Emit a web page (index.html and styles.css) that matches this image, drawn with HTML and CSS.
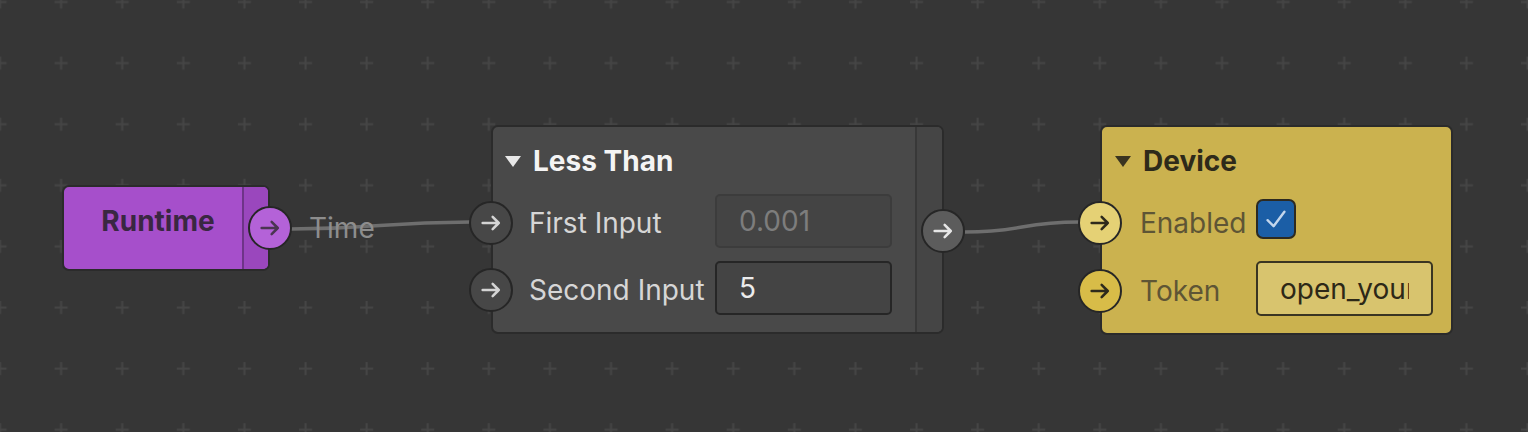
FILE: index.html
```html
<!DOCTYPE html>
<html>
<head>
<meta charset="utf-8">
<link rel="stylesheet" href="styles.css">
</head>
<body>
<div class="canvas">
  <svg class="grid" width="1528" height="432" aria-hidden="true">
    <defs>
      <pattern id="cross" width="61.1" height="61.1" patternUnits="userSpaceOnUse" x="-6.5" y="-4.5">
        <rect x="0" y="5.5" width="13" height="2" fill="#454545"/>
        <rect x="5.5" y="0" width="2" height="13" fill="#454545"/>
      </pattern>
    </defs>
    <rect width="1528" height="432" fill="url(#cross)"/>
  </svg>

  <svg class="wires" width="1528" height="432" aria-hidden="true">
    <path d="M291 229 C 380 229, 380 222, 470 222" />
    <path d="M965 232 C 1022 232, 1022 222, 1079 222" />
  </svg>

  <div class="node runtime">
    <div class="rt-main"><span class="rt-title">Runtime</span></div>
    <div class="rt-strip"></div>
    <span class="port port-runtime">
      <svg viewBox="0 0 18 16" class="arrow"><path d="M1.5 8 H16 M10.5 2.5 L16 8 L10.5 13.5"/></svg>
    </span>
    <span class="out-label">Time</span>
  </div>

  <div class="node less">
    <div class="node-main">
      <div class="node-head"><span class="tri"></span><span class="node-title">Less Than</span></div>
      <div class="rows">
        <div class="row">
          <span class="port port-grey port-in"><svg viewBox="0 0 18 16" class="arrow"><path d="M1.5 8 H16 M10.5 2.5 L16 8 L10.5 13.5"/></svg></span>
          <span class="label">First Input</span>
          <span class="field field-disabled">0.001</span>
        </div>
        <div class="row">
          <span class="port port-grey port-in"><svg viewBox="0 0 18 16" class="arrow"><path d="M1.5 8 H16 M10.5 2.5 L16 8 L10.5 13.5"/></svg></span>
          <span class="label">Second Input</span>
          <span class="field">5</span>
        </div>
      </div>
    </div>
    <div class="node-strip"></div>
    <span class="port port-light port-out-less"><svg viewBox="0 0 18 16" class="arrow"><path d="M1.5 8 H16 M10.5 2.5 L16 8 L10.5 13.5"/></svg></span>
  </div>

  <div class="node device">
    <div class="node-main device-main">
      <div class="node-head"><span class="tri tri-dark"></span><span class="node-title dark">Device</span></div>
      <div class="rows">
        <div class="row drow">
          <span class="port port-yellow-hi port-in"><svg viewBox="0 0 18 16" class="arrow"><path d="M1.5 8 H16 M10.5 2.5 L16 8 L10.5 13.5"/></svg></span>
          <span class="label dlabel">Enabled</span>
          <span class="check"><svg viewBox="0 0 20 20"><path d="M3 11 L8 16 L17 4"/></svg></span>
        </div>
        <div class="row drow">
          <span class="port port-yellow port-in"><svg viewBox="0 0 18 16" class="arrow"><path d="M1.5 8 H16 M10.5 2.5 L16 8 L10.5 13.5"/></svg></span>
          <span class="label dlabel">Token</span>
          <span class="field field-yellow"><span class="clip">open_your</span></span>
        </div>
      </div>
    </div>
  </div>
</div>
</body>
</html>
```

FILE: styles.css
```css
* { box-sizing: border-box; }
html, body { margin: 0; padding: 0; }
body {
  background: #363636;
  font-family: Inter, "Open Sans", sans-serif;
  width: 1528px;
  height: 432px;
  overflow: hidden;
}
.canvas {
  position: relative;
  width: 1528px;
  height: 432px;
  background: #363636;
}
.grid, .wires {
  position: absolute;
  left: 0;
  top: 0;
}
.wires path {
  fill: none;
  stroke: #6e6e6e;
  stroke-width: 3.5;
}

.node {
  position: absolute;
  display: flex;
  border: 2px solid #2b2b2b;
  border-radius: 7px;
}

/* Runtime */
.runtime {
  left: 62px;
  top: 185px;
  width: 208px;
  height: 86px;
  background: #a64fcb;
}
.rt-main {
  flex: 1;
  display: flex;
  justify-content: center;
  padding-left: 10px;
  padding-top: 17px;
}
.rt-title {
  font-size: 28px;
  line-height: 34px;
  font-weight: 700;
  color: #3a2742;
}
.rt-strip {
  width: 26px;
  border-left: 2px solid #6e3488;
  background: #9a47bd;
  border-radius: 0 5px 5px 0;
}
.out-label {
  position: absolute;
  left: 245px;
  top: 24px;
  font-size: 28px;
  line-height: 34px;
  color: #8d8d8d;
}

/* Ports */
.port {
  position: absolute;
  width: 44px;
  height: 44px;
  border-radius: 50%;
  border: 2px solid #262626;
  display: flex;
  align-items: center;
  justify-content: center;
}
.arrow {
  width: 20px;
  height: 18px;
}
.arrow path {
  fill: none;
  stroke-width: 2.3;
  stroke-linecap: round;
  stroke-linejoin: round;
}
.port-runtime {
  right: -24px;
  top: 19px;
  background: #b462d8;
}
.port-runtime .arrow path { stroke: #4b3552; }
.port-grey { background: #474747; }
.port-grey .arrow path { stroke: #d4d4d4; }
.port-light { background: #5c5c5c; }
.port-light .arrow path { stroke: #e6e6e6; }
.port-yellow-hi { background: #e5d175; }
.port-yellow { background: #d8bc48; }
.port-yellow-hi .arrow path, .port-yellow .arrow path { stroke: #2e2a1c; }

.port-in {
  left: -24px;
  top: calc(50% - 20px);
}
.port-out-less {
  right: -23px;
  top: 82px;
}

/* Less Than */
.less {
  left: 491px;
  top: 125px;
  width: 453px;
  height: 209px;
  background: #494949;
}
.node-main {
  flex: 1;
  display: flex;
  flex-direction: column;
  padding: 17px 23px 17px 0;
}
.node-strip {
  width: 27px;
  border-left: 2px solid #383838;
  background: #454545;
  border-radius: 0 5px 5px 0;
}
.node-head {
  display: flex;
  align-items: center;
  padding-left: 12px;
  gap: 12px;
  height: 34px;
}
.tri {
  width: 0;
  height: 0;
  border-left: 8.5px solid transparent;
  border-right: 8.5px solid transparent;
  border-top: 11px solid #e8e8e8;
  margin-top: 0;
}
.tri-dark { border-top-color: #3a3420; }
.node-title {
  font-size: 28px;
  line-height: 34px;
  font-weight: 700;
  color: #f4f4f4;
}
.node-title.dark { color: #2e2a1a; }
.rows {
  display: flex;
  flex-direction: column;
  gap: 13px;
  margin-top: 16px;
}
.row {
  position: relative;
  display: flex;
  align-items: center;
  justify-content: space-between;
  height: 54px;
  padding-left: 36px;
}
.label {
  font-size: 28px;
  line-height: 34px;
  color: #d6d6d6;
  padding-top: 4px;
}
.field {
  width: 177px;
  height: 54px;
  border: 2px solid #262626;
  border-radius: 5px;
  background: #444444;
  display: flex;
  align-items: center;
  padding-left: 22px;
  font-size: 28px;
  color: #ececec;
}
.field-disabled {
  border-color: #3c3c3c;
  color: #7d7d7d;
}

/* Device */
.device {
  left: 1100px;
  top: 125px;
  width: 353px;
  height: 210px;
  background: #cbb24f;
}
.device-main {
  padding-right: 18px;
}
.device .node-head {
  padding-left: 13px;
  gap: 12px;
}
.drow {
  display: grid;
  grid-template-columns: 116px 177px;
  justify-content: start;
  padding-left: 38px;
}
.drow + .drow { height: 55px; }
.dlabel { color: #5e5535; }
.check {
  width: 40px;
  height: 40px;
  border-radius: 7px;
  border: 2px solid #2d2a20;
  background: #1b5ea6;
  display: flex;
  align-items: center;
  justify-content: center;
  margin-top: -4px;
}
.check svg { width: 24px; height: 24px; }
.check path {
  fill: none;
  stroke: #c3d6ec;
  stroke-width: 2;
  stroke-linecap: round;
  stroke-linejoin: round;
}
.field-yellow {
  height: 55px;
  background: #d8c46e;
  border-color: #3a3522;
  color: #2d2817;
  padding-left: 22px;
  overflow: hidden;
  white-space: nowrap;
}
.clip {
  display: block;
  width: 129px;
  overflow: hidden;
}
```
